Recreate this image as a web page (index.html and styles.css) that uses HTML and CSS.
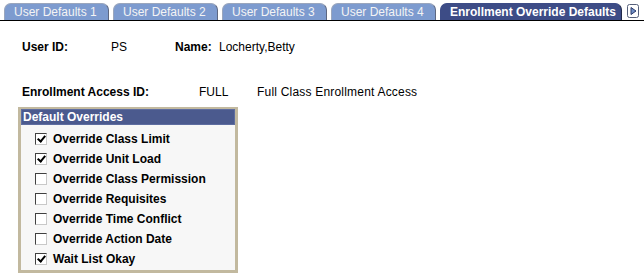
FILE: index.html
```html
<!DOCTYPE html>
<html lang="en">
<head>
    <meta charset="UTF-8">
    <title>Enrollment Override Defaults</title>
    <link rel="stylesheet" href="styles.css">
</head>
<body>
    <div class="tab-bar">
        <div class="tab">User Defaults 1</div>
        <div class="tab">User Defaults 2</div>
        <div class="tab">User Defaults 3</div>
        <div class="tab">User Defaults 4</div>
        <div class="tab active">Enrollment Override Defaults</div>
        <svg class="next-tab" width="12" height="14" viewBox="0 0 12 14">
            <rect x="0.5" y="0.5" width="11" height="13" rx="2" fill="#fff" stroke="#56607a"/>
            <path d="M4 3.5 L9 7 L4 10.5 Z" fill="#6f8fc6" stroke="#2c3a6a" stroke-width="1" stroke-linejoin="round"/>
        </svg>
    </div>

    <div class="page">
        <div class="field-row first">
            <span class="label w-userid">User ID:</span>
            <span class="value w-ps">PS</span>
            <span class="label w-name">Name:</span>
            <span class="value">Locherty,Betty</span>
        </div>
        <div class="field-row second">
            <span class="label w-access">Enrollment Access ID:</span>
            <span class="value w-full">FULL</span>
            <span class="value wide">Full Class Enrollment Access</span>
        </div>

        <div class="group-box">
            <div class="group-header">Default Overrides</div>
            <div class="group-body">
                <label class="check-row"><span class="check on"></span>Override Class Limit</label>
                <label class="check-row"><span class="check on"></span>Override Unit Load</label>
                <label class="check-row"><span class="check"></span>Override Class Permission</label>
                <label class="check-row"><span class="check"></span>Override Requisites</label>
                <label class="check-row"><span class="check"></span>Override Time Conflict</label>
                <label class="check-row"><span class="check"></span>Override Action Date</label>
                <label class="check-row"><span class="check on"></span>Wait List Okay</label>
            </div>
        </div>
    </div>
</body>
</html>
```

FILE: styles.css
```css
* {
    box-sizing: border-box;
    margin: 0;
    padding: 0;
}

body {
    font-family: "Liberation Sans", Arial, sans-serif;
    font-size: 12px;
    color: #000;
    background-color: #fff;
    width: 644px;
    height: 274px;
    overflow: hidden;
}

.tab-bar {
    display: flex;
    align-items: flex-end;
    gap: 4px;
    padding: 3px 0 0 4px;
    height: 21px;
    border-bottom: 1px solid #000;
}

.tab {
    width: 105px;
    height: 17px;
    padding: 1px 0 0 9px;
    line-height: 15px;
    background-color: #7d9bcf;
    color: #f4f4f4;
    border: 1px solid #9aa6bd;
    border-right-color: #5d6780;
    border-bottom: none;
    border-radius: 7px 7px 0 0;
    white-space: nowrap;
}

.tab.active {
    width: 182px;
    background-color: #3d4c86;
    color: #fff;
    font-weight: bold;
    border-color: #3d4c86;
    border-right-color: #222a4a;
}

.next-tab {
    margin: 0 0 2px 1px;
}

.page {
    padding: 19px 0 0 18px;
}

.field-row {
    display: flex;
    padding-left: 4px;
    line-height: 14px;
}

.field-row.second {
    margin-top: 31px;
}

.label {
    font-weight: bold;
}

.w-userid { width: 89px; }
.w-ps { width: 64px; }
.w-name { width: 44px; }
.w-access { width: 177px; }
.w-full { width: 58px; }

.wide {
    letter-spacing: 0.2px;
}

.group-box {
    margin-top: 8px;
    width: 220px;
    height: 166px;
    border: 3px solid #c2b99f;
    border-top-width: 2px;
    background-color: #f7f7f7;
}

.group-header {
    height: 16px;
    padding-left: 1px;
    line-height: 15px;
    background-color: #4b5a8e;
    border: 1px solid #5e6da0;
    color: #fff;
    font-weight: bold;
}

.group-body {
    padding: 4px 0 0 14px;
}

.check-row {
    display: flex;
    align-items: center;
    gap: 6px;
    height: 20px;
    font-weight: bold;
}

.check {
    width: 12px;
    height: 12px;
    border: 1px solid #404040;
    border-right-color: #c8c8c8;
    border-bottom-color: #c8c8c8;
    background-color: #fff;
    position: relative;
}

.check.on::after {
    content: "";
    position: absolute;
    left: 3px;
    top: 0px;
    width: 3px;
    height: 6px;
    border: solid #000;
    border-width: 0 2px 2px 0;
    transform: rotate(40deg);
}
```
